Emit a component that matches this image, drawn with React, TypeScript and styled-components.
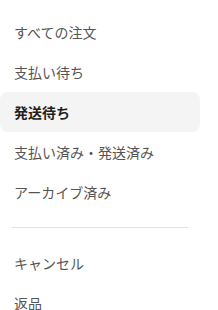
import React, { useState } from 'react';
import styled, { createGlobalStyle } from 'styled-components';

const GlobalStyle = createGlobalStyle`
  body {
    margin: 0;
    background: #ffffff;
    font-family: "Noto Sans CJK JP", "Noto Sans", sans-serif;
  }
`;

const Menu = styled.nav`
  display: flex;
  flex-direction: column;
  width: 200px;
  padding-top: 12px;
`;

const Item = styled.div<{ $active?: boolean }>`
  display: flex;
  align-items: center;
  height: 40px;
  padding-left: 14px;
  border-radius: 8px;
  font-size: 14px;
  color: ${(p) => (p.$active ? '#1f1f1f' : '#555555')};
  font-weight: ${(p) => (p.$active ? 700 : 400)};
  background: ${(p) => (p.$active ? '#f4f4f4' : 'transparent')};
  cursor: pointer;
`;

const Divider = styled.hr`
  border: none;
  border-top: 1px solid #e2e2e2;
  margin: 15px 12px;
`;

const mainItems = ['すべての注文', '支払い待ち', '発送待ち', '支払い済み・発送済み', 'アーカイブ済み'];
const otherItems = ['キャンセル', '返品'];

const App: React.FC = () => {
  const [active, setActive] = useState('発送待ち');

  return (
    <>
      <GlobalStyle />
      <Menu>
        {mainItems.map((label) => (
          <Item key={label} $active={active === label} onClick={() => setActive(label)}>
            {label}
          </Item>
        ))}
        <Divider />
        {otherItems.map((label) => (
          <Item key={label} $active={active === label} onClick={() => setActive(label)}>
            {label}
          </Item>
        ))}
      </Menu>
    </>
  );
};

export default App;
